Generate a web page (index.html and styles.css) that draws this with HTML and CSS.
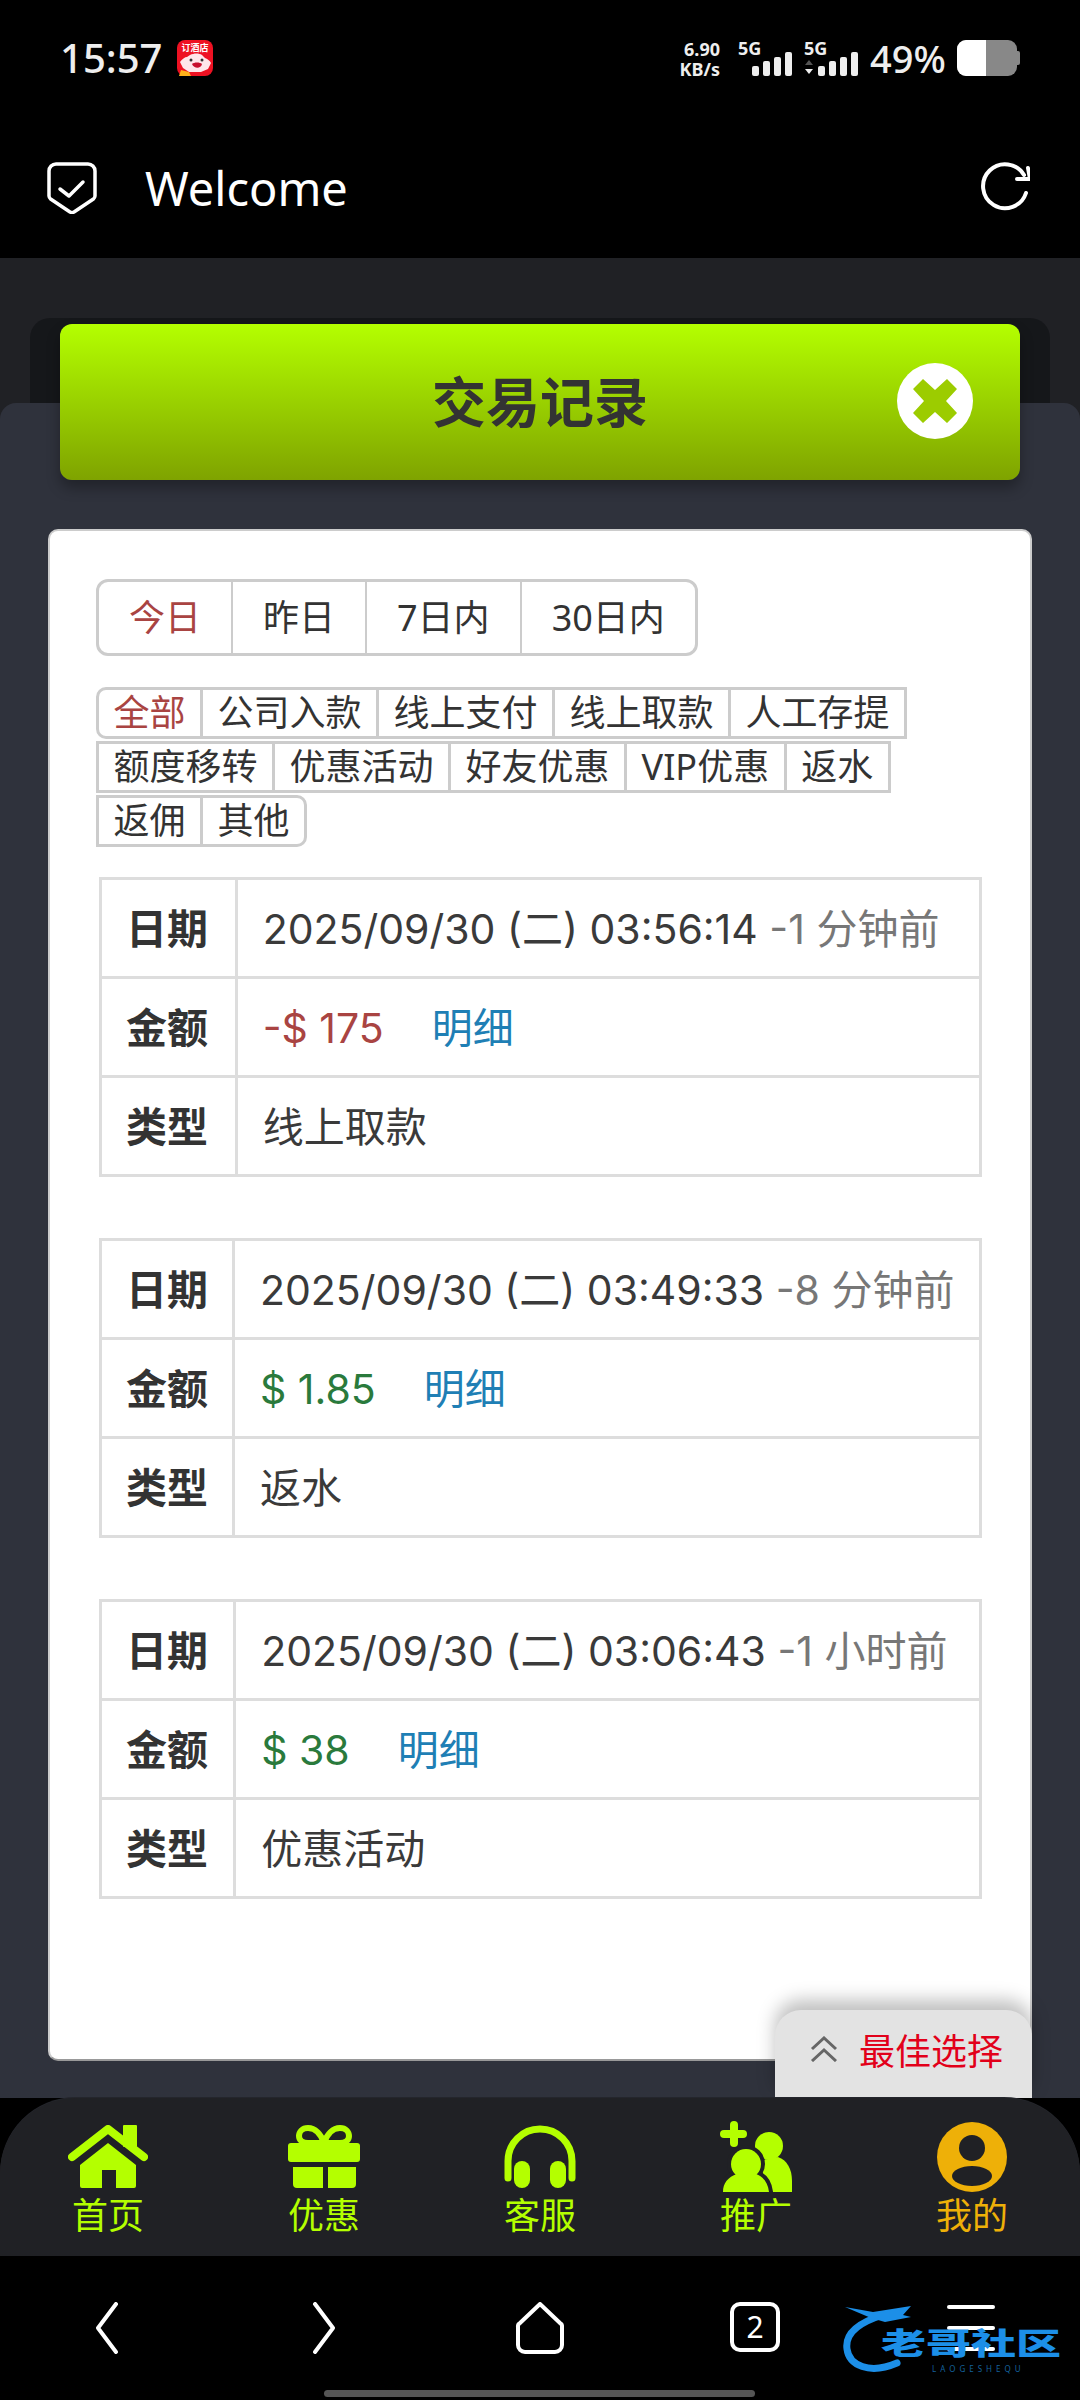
FILE: index.html
```html
<!DOCTYPE html>
<html lang="zh-CN">
<head>
    <meta charset="UTF-8">
    <meta name="viewport" content="width=device-width, initial-scale=1.0">
    <title>交易记录</title>
    <link rel="stylesheet" href="styles.css">
</head>
<body>
    <div class="status">
        <span class="clock">15:57</span>
        <div class="app-badge">
            <svg viewBox="0 0 36 36" width="36" height="36">
                <rect width="36" height="36" rx="8" fill="#ee1122"/>
                <path d="M3 22c2-3 5-5 7-5l3-2c4-2 9-2 12 0l3 3c3 1 5 3 6 5l-3 6-7 3H12l-6-4z" fill="#ffe6ea"/>
                <path d="M15 24c2-2 8-2 10 0-1 5-8 5-10 0z" fill="#c8102e"/>
                <circle cx="14" cy="20" r="1.500" fill="#333"/>
                <circle cx="25" cy="20" r="1.500" fill="#333"/>
                <path d="M2 36l2-6 8 2 2 4z" fill="#ffb21a"/>
                <text x="18" y="11" class="badge-text" text-anchor="middle">订酒店</text>
            </svg>
        </div>
        <div class="status-right">
            <div class="speed"><span>6.90</span><span>KB/s</span></div>
            <div class="signal">
                <span class="net">5G</span>
                <svg viewBox="0 0 40 24" width="40" height="24"><rect y="14" width="7" height="10" rx="2"/><rect x="11" y="9" width="7" height="15" rx="2"/><rect x="22" y="5" width="7" height="19" rx="2"/><rect x="33" width="7" height="24" rx="2"/></svg>
            </div>
            <div class="signal signal-two">
                <span class="net">5G</span>
                <svg viewBox="0 0 54 24" width="54" height="24"><path d="M5 8l4 5H1z" fill="#555"/><path d="M1 17h8l-4 5z"/><rect x="14" y="14" width="7" height="10" rx="2"/><rect x="25" y="9" width="7" height="15" rx="2"/><rect x="36" y="5" width="7" height="19" rx="2"/><rect x="47" width="7" height="24" rx="2"/></svg>
            </div>
            <span class="percent">49%</span>
            <div class="battery"><div class="battery-level"></div></div>
            <div class="battery-nub"></div>
        </div>
    </div>

    <div class="appbar">
        <svg class="shield" viewBox="0 0 50 52" width="50" height="52" fill="none" stroke="#fff" stroke-width="3.5" stroke-linecap="round" stroke-linejoin="round">
            <path d="M9 2h32a7 7 0 0 1 7 7v25a4 4 0 0 1-1.600 3L27 50a4 4 0 0 1-4 0L3.600 37A4 4 0 0 1 2 34V9a7 7 0 0 1 7-7z"/>
            <path d="M13 27l9 7 14-14"/>
        </svg>
        <span class="appbar-title">Welcome</span>
        <svg class="reload" viewBox="0 0 50 50" width="50" height="50" fill="none" stroke="#fff" stroke-width="4" stroke-linecap="round" stroke-linejoin="round">
            <path d="M46 31A22 22 0 1 1 44 13"/>
            <path d="M48 6l2 11H37"/>
        </svg>
    </div>

    <main class="page">
        <div class="back-panel"></div>
        <div class="sheet">
            <div class="banner">
                <h1>交易记录</h1>
                <span class="close">
                    <svg viewBox="0 0 76 76" width="76" height="76">
                        <circle cx="38" cy="38" r="38" fill="#fff"/>
                        <path d="M26 16l12 11 12-11 10 10-11 12 11 12-10 10-12-11-12 11-10-10 11-12-11-12z" fill="#9ccc00"/>
                    </svg>
                </span>
            </div>

            <div class="card">
                <div class="tabs">
                    <a class="tab active">今日</a>
                    <a class="tab">昨日</a>
                    <a class="tab">7日内</a>
                    <a class="tab">30日内</a>
                </div>

                <div class="filters">
                    <div class="filter-row">
                        <a class="filter active first">全部</a>
                        <a class="filter">公司入款</a>
                        <a class="filter">线上支付</a>
                        <a class="filter">线上取款</a>
                        <a class="filter">人工存提</a>
                    </div>
                    <div class="filter-row">
                        <a class="filter">额度移转</a>
                        <a class="filter">优惠活动</a>
                        <a class="filter">好友优惠</a>
                        <a class="filter">VIP优惠</a>
                        <a class="filter">返水</a>
                    </div>
                    <div class="filter-row">
                        <a class="filter">返佣</a>
                        <a class="filter last">其他</a>
                    </div>
                </div>

                <table class="record">
                    <tr><th>日期</th><td>2025/09/30 (二) 03:56:14 <span class="ago">-1 分钟前</span></td></tr>
                    <tr><th>金额</th><td><span class="minus">-$ 175</span><a class="detail">明细</a></td></tr>
                    <tr><th>类型</th><td>线上取款</td></tr>
                </table>
                <table class="record">
                    <tr><th>日期</th><td>2025/09/30 (二) 03:49:33 <span class="ago">-8 分钟前</span></td></tr>
                    <tr><th>金额</th><td><span class="plus">$ 1.85</span><a class="detail">明细</a></td></tr>
                    <tr><th>类型</th><td>返水</td></tr>
                </table>
                <table class="record">
                    <tr><th>日期</th><td>2025/09/30 (二) 03:06:43 <span class="ago">-1 小时前</span></td></tr>
                    <tr><th>金额</th><td><span class="plus">$ 38</span><a class="detail">明细</a></td></tr>
                    <tr><th>类型</th><td>优惠活动</td></tr>
                </table>
            </div>

            <div class="best">
                <svg viewBox="0 0 28 26" width="28" height="26" fill="none" stroke="#666" stroke-width="3"><path d="M2 13L14 2l12 11"/><path d="M2 25l12-11 12 11"/></svg>
                <span>最佳选择</span>
            </div>
        </div>
    </main>

    <nav class="tabbar">
        <a class="nav-item">
            <span class="nav-icon">
                <svg viewBox="0 0 80 64" width="80" height="64" fill="#b4ff00">
                    <rect x="55" width="14" height="22" rx="1"/>
                    <path d="M4 32L40 4l36 28" fill="none" stroke="#b4ff00" stroke-width="8" stroke-linecap="round" stroke-linejoin="round"/>
                    <path d="M40 18l28 22v21a2 2 0 0 1-2 2H48V45H34v18H14a2 2 0 0 1-2-2V40z"/>
                </svg>
            </span>
            <span>首页</span>
        </a>
        <a class="nav-item">
            <span class="nav-icon">
                <svg viewBox="0 0 72 64" width="72" height="64" fill="#b4ff00">
                    <path d="M36 18c-3-9-9-15-16-15-6 0-9 4-9 8s3 7 9 7zM36 18c3-9 9-15 16-15 6 0 9 4 9 8s-3 7-9 7z" fill="none" stroke="#b4ff00" stroke-width="6"/>
                    <rect y="18" width="72" height="19" rx="3"/>
                    <path d="M5 42h30v21H9a4 4 0 0 1-4-4zM40 42h28v17a4 4 0 0 1-4 4H40z"/>
                </svg>
            </span>
            <span>优惠</span>
        </a>
        <a class="nav-item">
            <span class="nav-icon">
                <svg viewBox="0 0 72 64" width="72" height="64" fill="#b4ff00">
                    <path d="M4 53V36a32 32 0 0 1 64 0v17" fill="none" stroke="#b4ff00" stroke-width="7" stroke-linecap="round"/>
                    <rect x="10" y="36" width="16" height="27" rx="8"/>
                    <rect x="46" y="36" width="16" height="27" rx="8"/>
                </svg>
            </span>
            <span>客服</span>
        </a>
        <a class="nav-item">
            <span class="nav-icon">
                <svg viewBox="0 0 72 71" width="72" height="71" fill="#b4ff00">
                    <rect x="10" width="8" height="26" rx="4"/>
                    <rect y="9" width="27" height="8" rx="4"/>
                    <circle cx="49" cy="25" r="14"/>
                    <path d="M58 36c9 3 14 12 14 24v11H40V40z"/>
                    <g fill="#202125" stroke="#202125" stroke-width="8">
                        <circle cx="26" cy="43" r="15"/>
                        <path d="M3 71c0-9 5-15 14-18 5 5 14 5 19 0 8 3 12 9 13 18z"/>
                    </g>
                    <circle cx="26" cy="43" r="15"/>
                    <path d="M3 71c0-9 5-15 14-18 5 5 14 5 19 0 8 3 12 9 13 18z"/>
                </svg>
            </span>
            <span>推广</span>
        </a>
        <a class="nav-item nav-me">
            <span class="nav-icon">
                <svg viewBox="0 0 70 70" width="70" height="70">
                    <circle cx="35" cy="35" r="35" fill="#eeb008"/>
                    <circle cx="35" cy="26" r="13" fill="#202125"/>
                    <ellipse cx="35" cy="54" rx="20" ry="10" fill="#202125"/>
                </svg>
            </span>
            <span>我的</span>
        </a>
    </nav>

    <div class="sysnav">
        <svg class="sys-icon" viewBox="0 0 24 52" width="24" height="52" fill="none" stroke="#fff" stroke-width="4" stroke-linecap="round" stroke-linejoin="round"><path d="M21 2L3 26l18 24"/></svg>
        <svg class="sys-icon" viewBox="0 0 24 52" width="24" height="52" fill="none" stroke="#fff" stroke-width="4" stroke-linecap="round" stroke-linejoin="round"><path d="M3 2l18 24L3 50"/></svg>
        <svg class="sys-home" viewBox="0 0 52 52" width="52" height="52" fill="none" stroke="#fff" stroke-width="4" stroke-linejoin="round"><path d="M26 2l20 19a4 4 0 0 1 2 4v18a7 7 0 0 1-7 7H11a7 7 0 0 1-7-7V25a4 4 0 0 1 2-4z"/></svg>
        <span class="tab-count">2</span>
        <div class="menu-lines"><i></i><i></i><i></i></div>
        <div class="watermark">
            <svg viewBox="0 0 120 72" width="120" height="72" fill="none">
                <path d="M40 12C14 20 2 32 4 46c2 16 22 26 50 14" stroke="#1c8fe8" stroke-width="7" stroke-linecap="round"/>
                <path d="M2 4l28 5 38-6-8 9 8 2-26 5-14-4z" fill="#1c8fe8"/>
            </svg>
            <strong>老哥社区</strong>
            <em>LAOGESHEQU</em>
        </div>
        <div class="home-pill"></div>
    </div>
</body>
</html>
```

FILE: styles.css
```css
* {
    box-sizing: border-box;
}
html, body {
    margin: 0;
    padding: 0;
}
body {
    width: 1080px;
    height: 2400px;
    overflow: hidden;
    display: flex;
    flex-direction: column;
    background: #000;
    color: #333;
    font-family: "Noto Sans", "Noto Sans CJK SC", sans-serif;
}

/* status bar */
.status {
    height: 130px;
    flex: none;
    display: flex;
    align-items: flex-start;
    padding: 40px 60px 0;
    color: #eee;
}
.clock {
    font-size: 40px;
    font-weight: 500;
    line-height: 36px;
    width: 117px;
}
.app-badge {
    height: 36px;
}
.badge-text {
    font-size: 9px;
    font-weight: 700;
    fill: #fff;
}
.status-right {
    margin-left: auto;
    display: flex;
    align-items: flex-start;
}
.speed {
    display: flex;
    flex-direction: column;
    align-items: flex-end;
    font-size: 18px;
    font-weight: 700;
    line-height: 20px;
    width: 44px;
    margin-top: -1px;
}
.signal {
    position: relative;
    width: 54px;
    height: 36px;
    margin-left: 18px;
    display: flex;
    justify-content: flex-end;
    align-items: flex-end;
    fill: #eee;
}
.signal-two {
    margin-left: 12px;
}
.net {
    position: absolute;
    left: 0;
    top: 0;
    font-size: 18px;
    font-weight: 700;
    line-height: 16px;
}
.percent {
    font-size: 38px;
    font-weight: 500;
    line-height: 36px;
    margin-left: 12px;
    width: 87px;
}
.battery {
    width: 60px;
    height: 36px;
    border-radius: 9px;
    background: #888;
    overflow: hidden;
    flex: none;
}
.battery-level {
    width: 29px;
    height: 100%;
    background: #fff;
}
.battery-nub {
    width: 3px;
    height: 14px;
    margin-top: 11px;
    border-radius: 0 2px 2px 0;
    background: #888;
}

/* app bar */
.appbar {
    height: 128px;
    flex: none;
    display: flex;
    align-items: flex-start;
    padding: 32px 50px 0 47px;
}
.appbar-title {
    color: #fff;
    font-size: 47px;
    line-height: 52px;
    margin-left: 48px;
}
.reload {
    margin-left: auto;
}

/* page */
.page {
    flex: 1;
    position: relative;
    background: #202125;
    overflow: hidden;
}
.back-panel {
    position: absolute;
    left: 30px;
    right: 30px;
    top: 60px;
    height: 200px;
    background: #15171a;
    border-radius: 20px;
}
.sheet {
    position: absolute;
    left: 0;
    right: 0;
    top: 145px;
    bottom: 0;
    background: #2f323c;
    border-radius: 16px 16px 0 0;
}
.banner {
    position: absolute;
    left: 60px;
    right: 60px;
    top: -79px;
    height: 156px;
    display: flex;
    align-items: center;
    justify-content: center;
    padding-bottom: 6px;
    border-radius: 12px;
    background: linear-gradient(#b4ff00, #7fa300);
    box-shadow: 0 8px 14px rgba(0, 0, 0, 0.3);
}
.banner h1 {
    margin: 0;
    color: #333;
    font-size: 54px;
    font-weight: 700;
    font-family: "Noto Sans CJK SC", sans-serif;
}
.close {
    position: absolute;
    right: 47px;
    top: 39px;
    height: 76px;
}

/* card */
.card {
    position: absolute;
    left: 48px;
    right: 48px;
    top: 126px;
    height: 1532px;
    background: #fff;
    border: 2px solid #ccc;
    border-bottom-color: #999;
    border-radius: 10px;
    padding: 48px 49px 0 46px;
}
.tabs {
    display: inline-flex;
    border: 3px solid #ccc;
    border-radius: 12px;
    height: 77px;
}
.tab {
    font-size: 36px;
    line-height: 71px;
    padding: 0 30px;
    border-left: 2px solid #ccc;
    color: #333;
}
.tab:first-child {
    border-left: 0;
}
.active {
    color: #a94442;
}
.filters {
    margin-top: 31px;
    display: flex;
    flex-direction: column;
    gap: 2px;
}
.filter-row {
    display: flex;
}
.filter {
    font-size: 36px;
    line-height: 46px;
    padding: 0 14.5px;
    margin-left: -3px;
    background: #fff;
    border: 3px solid #ccc;
    color: #333;
}
.filter:first-child {
    margin-left: 0;
}
.filter.active {
    color: #a94442;
}
.first {
    border-radius: 10px 0 0 10px;
}
.last {
    border-radius: 0 10px 10px 0;
}
.record {
    width: 883px;
    margin: 0 0 61px 3px;
    border-collapse: collapse;
    font-size: 41px;
}
.filters + .record {
    margin-top: 30px;
}
.record th, .record td {
    border: 3px solid #ddd;
    height: 99px;
    padding: 0 25px 5px;
    text-align: left;
    white-space: nowrap;
}
.record td {
    font-family: Inter, "Noto Sans CJK SC", sans-serif;
    font-weight: 400;
    color: #3a3a3a;
}
.record th {
    font-weight: 700;
    font-family: "Noto Sans CJK SC", sans-serif;
    padding: 0 24px 5px;
}
.ago {
    color: #777;
}
.minus {
    color: #a94442;
}
.plus {
    color: #2a7a3c;
}
.detail {
    color: #1f7fb5;
    margin-left: 48px;
}

.best {
    position: absolute;
    right: 48px;
    bottom: 0;
    width: 257px;
    height: 88px;
    display: flex;
    align-items: center;
    padding: 0 0 10px 35px;
    gap: 21px;
    background: #e3e3e3;
    border-radius: 26px 26px 0 0;
    box-shadow: 0 -10px 18px rgba(0, 0, 0, 0.25);
    color: #e2001a;
    font-size: 36px;
}

/* bottom tabs */
.tabbar {
    height: 158px;
    flex: none;
    display: flex;
    background: #202125;
    border-radius: 76px 76px 0 0;
    box-shadow: 0 -1px 0 #24262c;
    position: relative;
    padding-top: 23px;
}
.nav-item {
    width: 216px;
    display: flex;
    flex-direction: column;
    align-items: center;
    color: #b4ff00;
    font-size: 36px;
    line-height: 40px;
}
.nav-icon {
    height: 71px;
    margin-bottom: 4px;
    display: flex;
    align-items: center;
}
.nav-me {
    color: #eeb008;
}

/* system nav */
.sysnav {
    height: 144px;
    flex: none;
    position: relative;
    display: flex;
    align-items: flex-start;
    padding: 46px 0 0 95px;
    gap: 193px;
    background: #000;
}
.sys-home {
    margin-left: -15px;
}
.tab-count {
    width: 50px;
    height: 50px;
    border: 4px solid #fff;
    border-radius: 10px;
    color: #fff;
    font-size: 30px;
    line-height: 41px;
    text-align: center;
    margin-left: -29px;
}
.menu-lines {
    width: 48px;
    height: 46px;
    display: flex;
    flex-direction: column;
    justify-content: space-between;
    margin: 3px 0 0 -26px;
}
.menu-lines i {
    height: 4px;
    border-radius: 2px;
    background: #fff;
}
.watermark {
    position: absolute;
    left: 843px;
    top: 47px;
    width: 222px;
    height: 72px;
}
.watermark svg {
    position: absolute;
    left: 0;
    top: 0;
}
.watermark strong {
    position: absolute;
    left: 38px;
    top: 21px;
    font-family: "Noto Sans CJK SC", sans-serif;
    font-size: 30px;
    line-height: 34px;
    font-weight: 900;
    color: #1c8fe8;
    white-space: nowrap;
    transform: scaleX(1.5);
    transform-origin: left center;
}
.watermark em {
    position: absolute;
    left: 89px;
    top: 62px;
    font-style: normal;
    font-size: 8px;
    line-height: 8px;
    letter-spacing: 4px;
    color: #14609c;
}
.home-pill {
    position: absolute;
    left: 324px;
    top: 134px;
    width: 431px;
    height: 7px;
    border-radius: 4px;
    background: #555;
}
```
